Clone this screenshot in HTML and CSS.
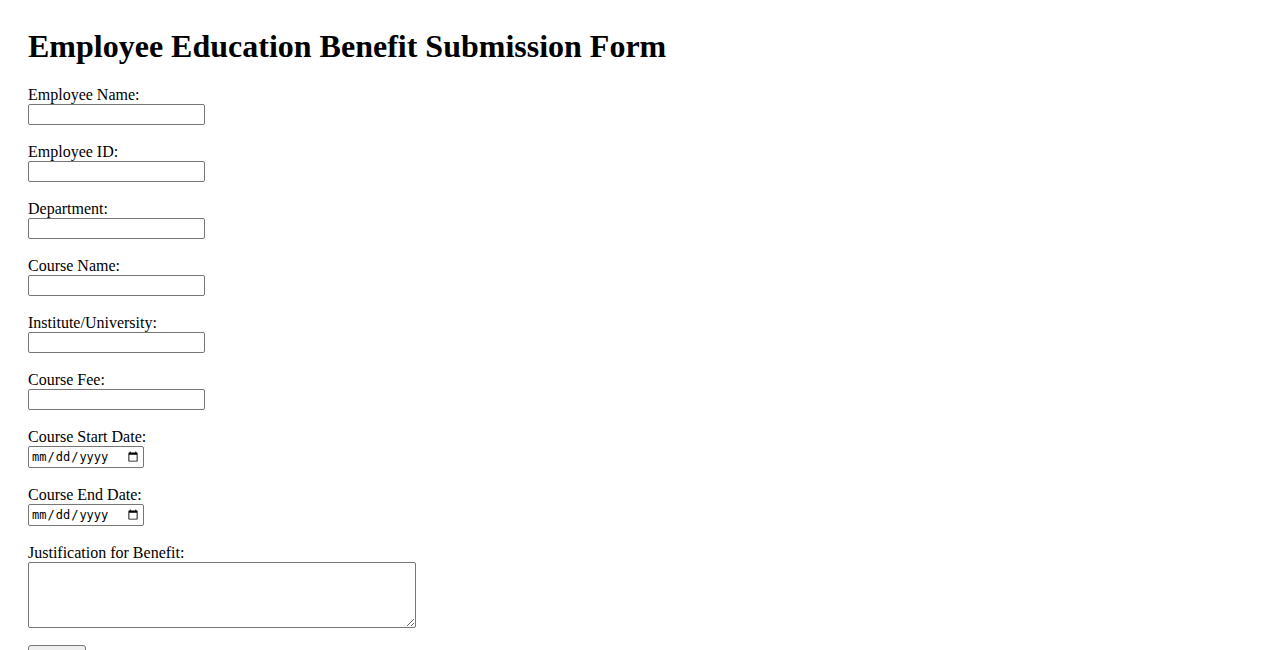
FILE: index.html
```html
<!DOCTYPE html>
<html lang="en">
<head>
<meta charset="utf-8">
<title>Employee Education Benefit Submission Form</title>
<link rel="stylesheet" href="styles.css">
</head>
<body>
<div class="page">
  <h1 class="title">Employee Education Benefit Submission Form</h1>
  <form class="form">
    <div class="field"><label class="label" for="name">Employee Name:</label><input class="text" id="name" type="text"></div>
    <div class="field"><label class="label" for="eid">Employee ID:</label><input class="text" id="eid" type="text"></div>
    <div class="field"><label class="label" for="dept">Department:</label><input class="text" id="dept" type="text"></div>
    <div class="field"><label class="label" for="course">Course Name:</label><input class="text" id="course" type="text"></div>
    <div class="field"><label class="label" for="inst">Institute/University:</label><input class="text" id="inst" type="text"></div>
    <div class="field"><label class="label" for="fee">Course Fee:</label><input class="text" id="fee" type="text"></div>
    <div class="field"><label class="label" for="start">Course Start Date:</label><input class="date" id="start" type="date"></div>
    <div class="field"><label class="label" for="end">Course End Date:</label><input class="date" id="end" type="date"></div>
    <div class="field field-area"><label class="label" for="just">Justification for Benefit:</label><textarea class="area" id="just" rows="4"></textarea></div>
    <button class="submit" type="submit">Submit</button>
  </form>
</div>
</body>
</html>
```
FILE: styles.css
```css
html, body {
  margin: 0;
  padding: 0;
  background: #ffffff;
}
body {
  font-family: "Liberation Serif", "Times New Roman", serif;
  font-size: 16px;
  color: #000000;
}
.page {
  padding: 28px 28px 0 28px;
}
.title {
  margin: 0 0 21px 0;
  font-size: 32px;
  font-weight: bold;
  line-height: 37px;
}
.form {
  margin: 0;
}
.field {
  display: flex;
  flex-direction: column;
  align-items: flex-start;
  margin-bottom: 17.6px;
}
.label {
  display: block;
  height: 18.4px;
  line-height: 18.4px;
}
.text {
  box-sizing: border-box;
  width: 177px;
  height: 21px;
  margin: 0;
  padding: 1px 2px;
  border: 1px solid #767676;
  border-radius: 2px;
  font-family: "Liberation Sans", Arial, sans-serif;
  font-size: 13.33px;
  background: #ffffff;
}
.date {
  box-sizing: border-box;
  width: 116px;
  height: 22px;
  margin: 0;
  padding: 1px 2px;
  border: 1px solid #767676;
  border-radius: 2px;
  font-family: "DejaVu Sans Mono", monospace;
  font-size: 12px;
  background: #ffffff;
}
.field-area {
  margin-bottom: 17px;
}
.area {
  box-sizing: border-box;
  width: 388px;
  height: 66px;
  margin: 0;
  padding: 2px;
  border: 1px solid #767676;
  border-radius: 2px;
  font-family: "Liberation Mono", monospace;
  font-size: 13.33px;
  background: #ffffff;
}
.submit {
  box-sizing: border-box;
  width: 58px;
  height: 21px;
  margin: 0;
  padding: 1px 6px;
  border: 1px solid #767676;
  border-radius: 3px;
  background: #efefef;
  font-family: "Liberation Sans", Arial, sans-serif;
  font-size: 13.33px;
  color: #000000;
}
```
